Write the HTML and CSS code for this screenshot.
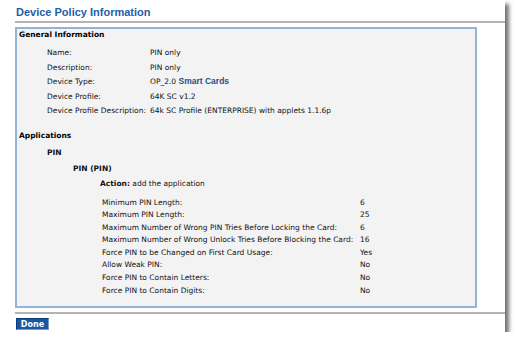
FILE: index.html
```html
<!DOCTYPE html>
<html lang="en">
<head>
<meta charset="utf-8"/>
<title>Device Policy Information</title>
<link rel="stylesheet" href="styles.css">
</head>
<body>
<div class="window">

  <!-- Title ------------------------------------------------------------------>
  <h1 class="title">Device Policy Information</h1>

  <div class="content">
    <div class="panel">
      <h2>General Information</h2>
      <table class="info">
        <tr><td class="lbl">Name:</td><td>PIN only</td></tr>
        <tr><td class="lbl">Description:</td><td>PIN only</td></tr>
        <tr><td class="lbl">Device Type:</td><td>OP_2.0 <span class="link">Smart Cards</span></td></tr>
        <tr><td class="lbl">Device Profile:</td><td>64K SC v1.2</td></tr>
        <tr><td class="lbl">Device Profile Description:</td><td>64k SC Profile (ENTERPRISE) with applets 1.1.6p</td></tr>
      </table>

      <h2 class="apps">Applications</h2>
      <div class="app">PIN</div>
      <div class="applet">PIN (PIN)</div>
      <div class="action"><b>Action:</b> add the application</div>

      <table class="params">
        <tr><td>Minimum PIN Length:</td><td>6</td></tr>
        <tr><td>Maximum PIN Length:</td><td>25</td></tr>
        <tr><td>Maximum Number of Wrong PIN Tries Before Locking the Card:</td><td>6</td></tr>
        <tr><td>Maximum Number of Wrong Unlock Tries Before Blocking the Card:</td><td>16</td></tr>
        <tr><td>Force PIN to be Changed on First Card Usage:</td><td>Yes</td></tr>
        <tr><td>Allow Weak PIN:</td><td>No</td></tr>
        <tr><td>Force PIN to Contain Letters:</td><td>No</td></tr>
        <tr><td>Force PIN to Contain Digits:</td><td>No</td></tr>
      </table>
    </div>

    <div class="footer">
      <button class="btn">Done</button>
    </div>
  </div>

</div>
</body>
</html>
```
FILE: styles.css
```css
*{margin:0;padding:0;box-sizing:border-box}
body{
  background:#fff;
  font-family:'DejaVu Sans',Verdana,sans-serif;
  font-size:7.5px;
  color:#111;
}
.window{
  width:505px;
  height:332px;
  background:#fff;
  box-shadow:4px 4px 4px rgba(0,0,0,.55);
}
.title{
  font-family:'Liberation Sans',Arial,sans-serif;
  font-size:11px;
  font-weight:700;
  color:#1f5ea8;
  padding:5px 0 0 16px;
  height:21px;
  line-height:14px;
}
.content{
  margin-left:15px;
  border-top:2px solid #b4b4b4;
  padding-top:4px;
}
.panel{
  width:462px;
  height:281px;
  background:#f3f3f3;
  border:2px solid #94b3d8;
  padding:1px 0 0 2px;
}
.panel h2{
  font-size:7.5px;
  font-weight:700;
  color:#000;
  line-height:10px;
}
.info{
  border-collapse:collapse;
  margin:6px 0 0 28px;
}
.info td{
  line-height:14.5px;
  height:14.5px;
  padding:0;
  white-space:nowrap;
}
.info .lbl{width:103px}
.link{
  font-family:'Liberation Sans',Arial,sans-serif;
  font-size:8.5px;
  font-weight:700;
  color:#2a4f86;
  line-height:8px;
}
.apps{margin-top:12px}
.app{
  font-weight:700;
  margin:7px 0 0 28px;
}
.applet{
  font-weight:700;
  margin:7px 0 0 54px;
}
.action{
  margin:6px 0 0 81px;
}
.params{
  border-collapse:collapse;
  margin:9px 0 0 83px;
}
.params td{
  line-height:12.6px;
  padding:0;
  white-space:nowrap;
}
.params td:first-child{width:258px}
.footer{
  margin-top:4px;
  border-top:2px solid #b4b4b4;
  padding:4px 0 0 1px;
}
.btn{
  font-family:'DejaVu Sans',Verdana,sans-serif;
  font-size:8px;
  font-weight:700;
  color:#fff;
  background:#1557a4;
  border:1px solid #0c3c78;
  border-right-color:#7a9cc6;
  border-bottom-color:#7a9cc6;
  width:33px;
  height:12px;
  line-height:9px;
}
```
